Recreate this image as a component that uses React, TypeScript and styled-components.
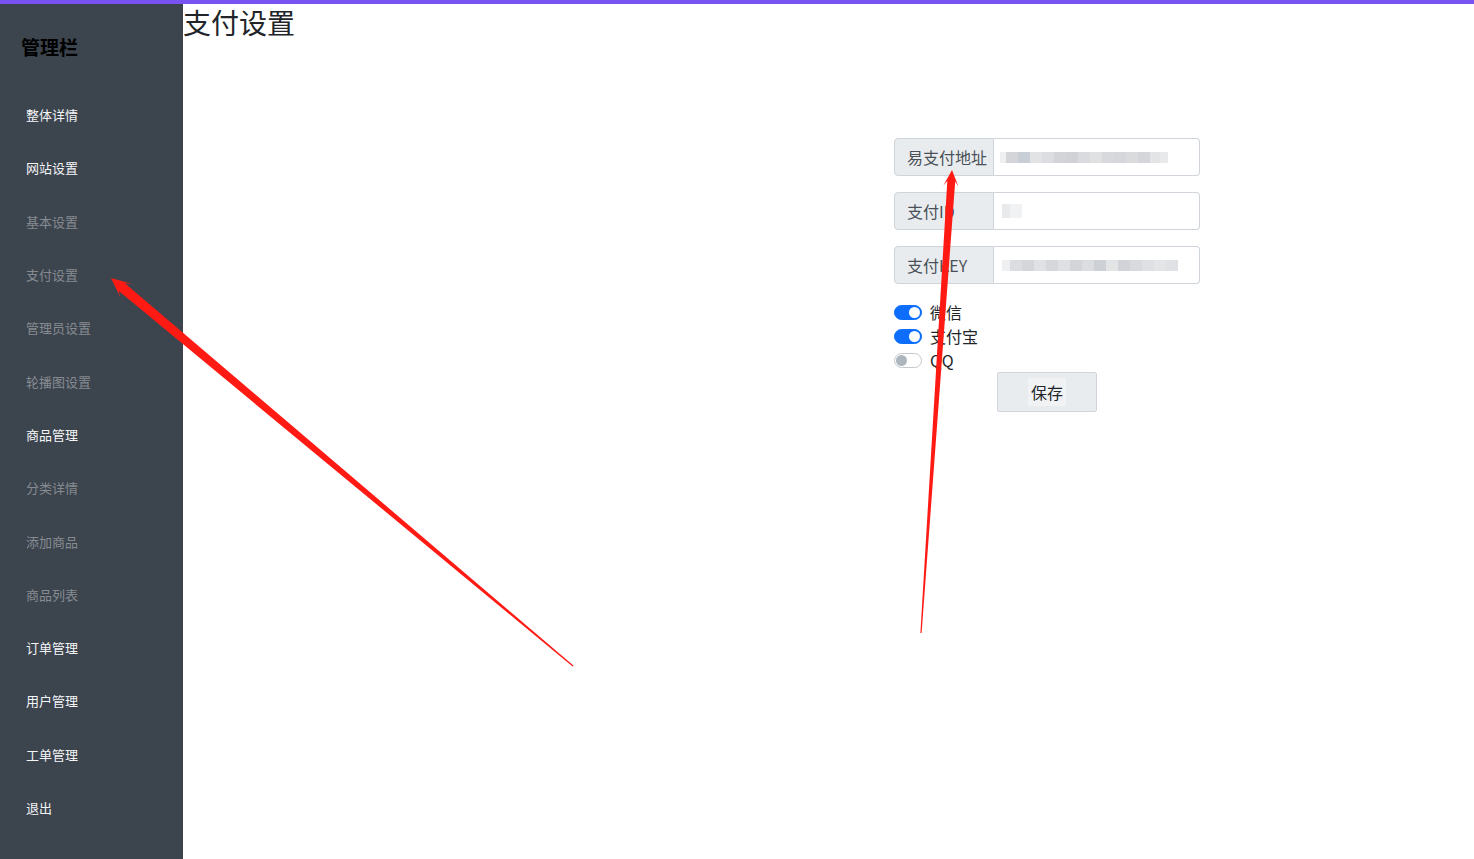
import React from "react";
import styled, { createGlobalStyle } from "styled-components";

const GlobalStyle = createGlobalStyle`
  html, body {
    margin: 0;
    padding: 0;
    background: #fff;
  }
  body {
    font-family: "Noto Sans CJK SC", "Liberation Sans", sans-serif;
    color: #212529;
  }
  * {
    box-sizing: border-box;
  }
`;

const Page = styled.div`
  position: relative;
  display: flex;
  min-height: 100vh;
  border-top: 4px solid #7952f2;
`;

const Sidebar = styled.nav`
  width: 183px;
  flex-shrink: 0;
  background: #3c444e;
  display: flex;
  flex-direction: column;
  padding-left: 21px;
`;

const Brand = styled.div`
  height: 84px;
  display: flex;
  align-items: center;
  font-size: 19px;
  font-weight: 700;
  color: #000;
`;

const MenuItem = styled.a<{ $sub?: boolean }>`
  height: 53.3px;
  display: flex;
  align-items: center;
  padding-left: 5px;
  font-size: 13px;
  color: ${(p) => (p.$sub ? "#868b91" : "#f4f5f7")};
  text-decoration: none;
`;

const Main = styled.main`
  flex: 1;
  display: flex;
  flex-direction: column;
`;

const Title = styled.h2`
  margin: 0;
  font-size: 28px;
  font-weight: 400;
  line-height: 36px;
  color: #212529;
`;

const Form = styled.form`
  width: 306px;
  margin: 98px 0 0 711px;
  display: flex;
  flex-direction: column;
`;

const InputGroup = styled.div`
  display: flex;
  height: 38px;
  margin-bottom: 16px;
`;

const GroupLabel = styled.span`
  width: 100px;
  display: flex;
  align-items: center;
  padding-left: 12px;
  font-size: 16px;
  color: #495057;
  background: #e9ecef;
  border: 1px solid #ced4da;
  border-radius: 4px 0 0 4px;
  white-space: nowrap;
`;

const GroupField = styled.div<{ $indent?: number }>`
  flex: 1;
  position: relative;
  display: flex;
  align-items: center;
  padding-left: ${(p) => p.$indent ?? 8}px;
  border: 1px solid #ced4da;
  border-left: none;
  border-radius: 0 4px 4px 0;
  background: #fff;
  overflow: hidden;
`;

const Smudge = styled.div`
  display: flex;
  align-items: center;
  filter: blur(0.6px);
`;

const Chip = styled.span<{ $w: number; $c: string; $h?: number }>`
  display: block;
  width: ${(p) => p.$w}px;
  height: ${(p) => p.$h ?? 11}px;
  background: ${(p) => p.$c};
`;

const SwitchRow = styled.label`
  display: flex;
  align-items: center;
  height: 24px;
  font-size: 16px;
  line-height: 22px;
  color: #212529;
`;

const Track = styled.span<{ $on: boolean }>`
  position: relative;
  width: 28px;
  height: 15px;
  margin-right: 8px;
  border-radius: 8px;
  background: ${(p) => (p.$on ? "#0d6efd" : "#fff")};
  border: 1px solid ${(p) => (p.$on ? "#0d6efd" : "#c4c9ce")};

  &::after {
    content: "";
    position: absolute;
    top: 1px;
    left: ${(p) => (p.$on ? "14px" : "1px")};
    width: 11px;
    height: 11px;
    border-radius: 50%;
    background: ${(p) => (p.$on ? "#fff" : "#adb5bd")};
  }
`;

const SaveButton = styled.button`
  align-self: center;
  width: 100px;
  height: 40px;
  border: 1px solid #ced4da;
  border-radius: 2px;
  background: #e9ecef;
  font-family: inherit;
  font-size: 16px;
  color: #212529;
  display: flex;
  align-items: center;
  justify-content: center;

  span {
    background: #f1f2f4;
    padding: 2px 3px;
  }
`;

const Overlay = styled.svg`
  position: absolute;
  top: -4px;
  left: 0;
  pointer-events: none;
`;

type Pt = [number, number];

// tapered arrow: thin tail, wider shaft near the head, notched triangular head
function arrowPoints(tail: Pt, tip: Pt, headLen: number, headHalf: number, tailHalf: number, neckHalf: number) {
  const dx = tip[0] - tail[0];
  const dy = tip[1] - tail[1];
  const len = Math.hypot(dx, dy);
  const ux = dx / len;
  const uy = dy / len;
  const nx = -uy;
  const ny = ux;
  const bx = tip[0] - ux * headLen;
  const by = tip[1] - uy * headLen;
  const notch = headLen * 0.3;
  const pts: Pt[] = [
    [tail[0] + nx * tailHalf, tail[1] + ny * tailHalf],
    [bx + nx * neckHalf + ux * notch, by + ny * neckHalf + uy * notch],
    [bx + nx * headHalf, by + ny * headHalf],
    tip,
    [bx - nx * headHalf, by - ny * headHalf],
    [bx - nx * neckHalf + ux * notch, by - ny * neckHalf + uy * notch],
    [tail[0] - nx * tailHalf, tail[1] - ny * tailHalf],
  ];
  return pts.map((p) => `${p[0].toFixed(1)},${p[1].toFixed(1)}`).join(" ");
}

const menu: { label: string; sub?: boolean }[] = [
  { label: "整体详情" },
  { label: "网站设置" },
  { label: "基本设置", sub: true },
  { label: "支付设置", sub: true },
  { label: "管理员设置", sub: true },
  { label: "轮播图设置", sub: true },
  { label: "商品管理" },
  { label: "分类详情", sub: true },
  { label: "添加商品", sub: true },
  { label: "商品列表", sub: true },
  { label: "订单管理" },
  { label: "用户管理" },
  { label: "工单管理" },
  { label: "退出" },
];

const urlChips: [number, string][] = [
  [6, "#eeeff0"], [12, "#d4d5d8"], [12, "#c9ced6"], [12, "#e2e3e5"], [12, "#dcdde0"],
  [12, "#d3d4d7"], [12, "#d0d2d6"], [12, "#dadbde"], [12, "#e0e1e3"], [12, "#d8d9dc"],
  [12, "#d6d7da"], [12, "#dadbdd"], [12, "#d4d6d9"], [10, "#e3e4e6"], [8, "#e8e9ea"],
];

const keyChips: [number, string][] = [
  [8, "#eeeff0"], [12, "#dcdde0"], [12, "#d4d6da"], [12, "#e0e1e4"], [12, "#d6d7db"],
  [12, "#dfe0e3"], [12, "#d3d5d9"], [12, "#dcdde0"], [12, "#cdd0d4"], [12, "#e3e4e6"],
  [12, "#d1d3d8"], [12, "#d9dadd"], [12, "#dfe0e3"], [12, "#e4e5e7"], [12, "#e0e1e4"],
];

export default function App() {
  return (
    <>
      <GlobalStyle />
      <Page>
        <Sidebar>
          <Brand>管理栏</Brand>
          {menu.map((m) => (
            <MenuItem key={m.label} $sub={m.sub} href="#">
              {m.label}
            </MenuItem>
          ))}
        </Sidebar>

        <Main>
          <Title>支付设置</Title>
          <Form onSubmit={(e) => e.preventDefault()}>
            <InputGroup>
              <GroupLabel>易支付地址</GroupLabel>
              <GroupField $indent={6}>
                <Smudge>
                  {urlChips.map(([w, c], i) => (
                    <Chip key={i} $w={w} $c={c} />
                  ))}
                </Smudge>
              </GroupField>
            </InputGroup>
            <InputGroup>
              <GroupLabel>支付ID</GroupLabel>
              <GroupField>
                <Smudge>
                  <Chip $w={8} $c="#e9eaec" $h={14} />
                  <Chip $w={12} $c="#f1f2f3" $h={14} />
                </Smudge>
              </GroupField>
            </InputGroup>
            <InputGroup>
              <GroupLabel>支付KEY</GroupLabel>
              <GroupField>
                <Smudge>
                  {keyChips.map(([w, c], i) => (
                    <Chip key={i} $w={w} $c={c} />
                  ))}
                </Smudge>
              </GroupField>
            </InputGroup>

            <SwitchRow>
              <Track $on />
              微信
            </SwitchRow>
            <SwitchRow>
              <Track $on />
              支付宝
            </SwitchRow>
            <SwitchRow>
              <Track $on={false} />
              QQ
            </SwitchRow>

            <SaveButton type="submit">
              <span>保存</span>
            </SaveButton>
          </Form>
        </Main>

        <Overlay width={1474} height={859} viewBox="0 0 1474 859">
          <polygon fill="#ff1a14" points={arrowPoints([573, 666], [111, 278], 20, 9, 0.6, 5)} />
          <polygon fill="#ff1a14" points={arrowPoints([921, 633], [952, 170], 16, 7.5, 0.6, 4)} />
        </Overlay>
      </Page>
    </>
  );
}
